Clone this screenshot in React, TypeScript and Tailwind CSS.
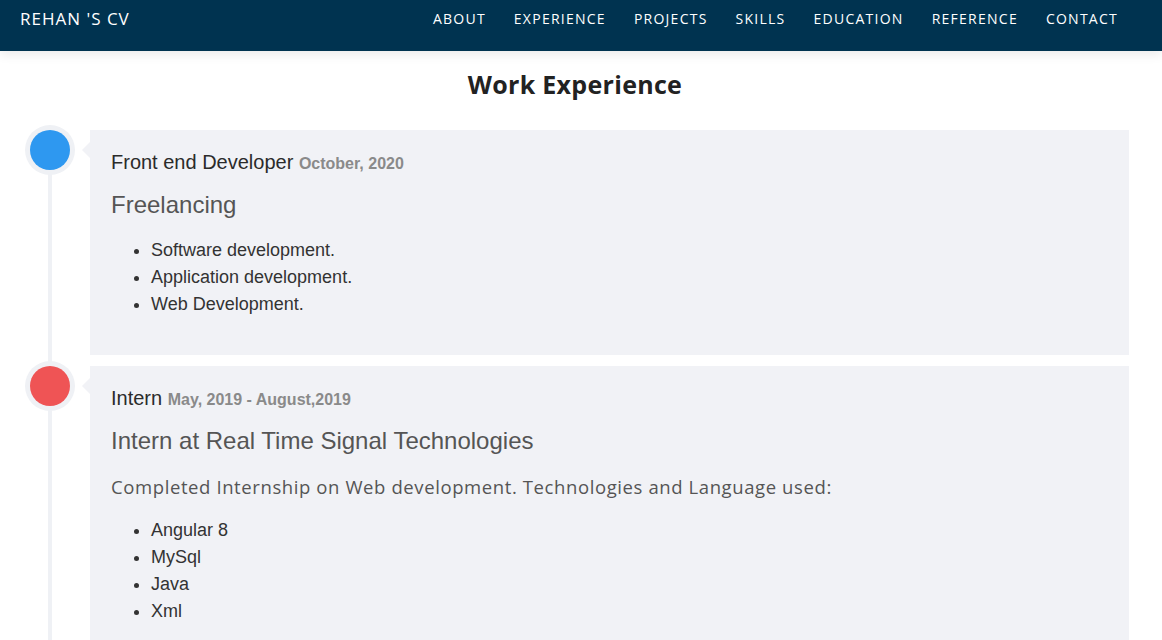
import React from "react";

const navItems = ["About", "Experience", "Projects", "Skills", "Education", "Reference", "Contact"];

type Job = {
  role: string;
  date: string;
  company: string;
  text?: string;
  items: string[];
  color: string;
};

const jobs: Job[] = [
  {
    role: "Front end Developer",
    date: "October, 2020",
    company: "Freelancing",
    items: ["Software development.", "Application development.", "Web Development."],
    color: "bg-[#2e98f0]",
  },
  {
    role: "Intern",
    date: "May, 2019 - August,2019",
    company: "Intern at Real Time Signal Technologies",
    text: "Completed Internship on Web development. Technologies and Language used:",
    items: ["Angular 8", "MySql", "Java", "Xml"],
    color: "bg-[#ef5455]",
  },
];

const TimelineItem = ({ job }: { job: Job }) => {
  return (
    <div className="flex gap-[15px]">
      <div className="w-[50px] shrink-0 flex justify-center">
        <div className="mt-[-5px] h-[50px] w-[50px] rounded-full bg-[#eff1f5] flex items-center justify-center relative z-10">
          <div className={`h-[40px] w-[40px] rounded-full ${job.color}`}></div>
        </div>
      </div>
      <div className="relative flex-1 bg-[#f1f2f6] pt-[20px] pb-[20px] px-[21px] font-['Liberation_Sans',Arial,sans-serif]">
        <div className="absolute left-[-8px] top-[12px] h-0 w-0 border-y-[8px] border-r-[8px] border-y-transparent border-r-[#f1f2f6]"></div>
        <div className="text-[20px] leading-[24px] text-[#2b2b2b]">
          {job.role} <span className="text-[16px] font-bold text-[#8a8a8a]">{job.date}</span>
        </div>
        <div className="mt-[15px] text-[24px] leading-[28px] text-[#555]">{job.company}</div>
        {job.text && (
          <p className="mt-[18px] text-[18.5px] leading-[27px] tracking-[0.6px] text-[#555] font-['Open_Sans',sans-serif]">
            {job.text}
          </p>
        )}
        <ul className={`${job.text ? "mt-[17px]" : "mt-[18px]"} mb-[17px] list-disc pl-[40px] text-[18px] leading-[27px] text-[#333]`}>
          {job.items.map((it) => (
            <li key={it}>{it}</li>
          ))}
        </ul>
      </div>
    </div>
  );
};

export default function App() {
  return (
    <div className="h-[640px] overflow-hidden bg-white">
      <nav className="h-[51px] bg-[#003350] flex justify-between pl-[20px] pr-[44px] pt-[10px] shadow-[0_4px_10px_rgba(0,0,0,0.08)] relative z-20 font-['Open_Sans',sans-serif] text-white">
        <div className="text-[17px] leading-[18px] tracking-[1px]">REHAN 'S CV</div>
        <div className="flex gap-[28px] text-[14px] leading-[18px] tracking-[1.25px] uppercase">
          {navItems.map((n) => (
            <span key={n}>{n}</span>
          ))}
        </div>
      </nav>
      <h2 className="mt-[18px] text-center text-[25px] leading-[30px] tracking-[0.3px] font-bold text-[#222] font-['Open_Sans',sans-serif] pr-[12px]">
        Work Experience
      </h2>
      <div className="relative mt-[31px] pl-[25px] pr-[33px]">
        <div className="absolute left-[48px] top-[20px] bottom-0 w-[4px] bg-[#eff1f5]"></div>
        <div className="flex flex-col gap-[11px]">
          {jobs.map((j) => (
            <TimelineItem key={j.role} job={j} />
          ))}
        </div>
      </div>
    </div>
  );
}
